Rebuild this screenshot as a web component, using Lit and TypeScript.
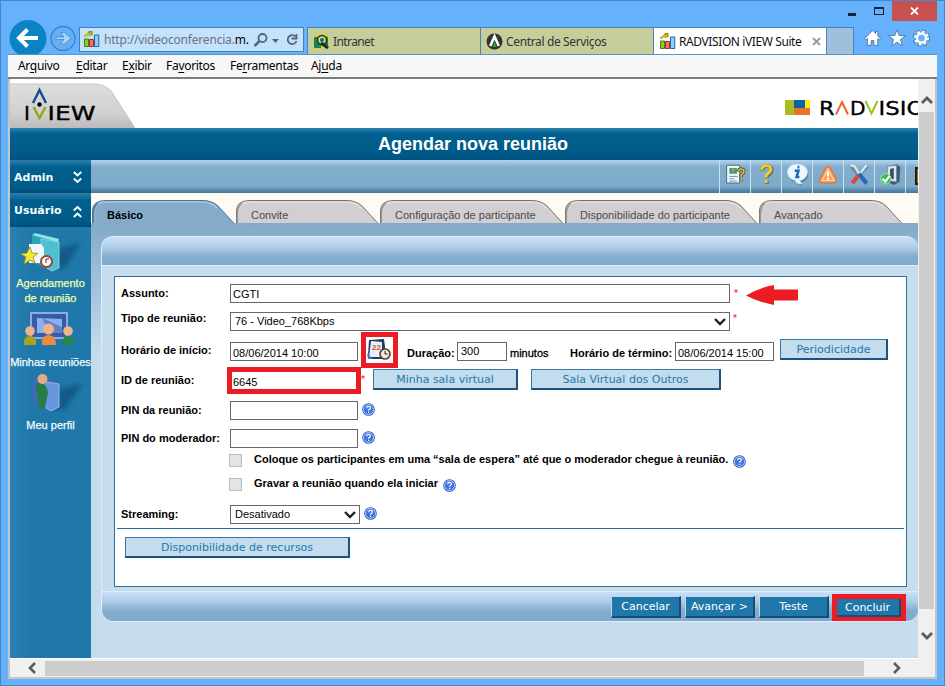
import { LitElement, html, css, svg } from "lit";
import { customElement } from "lit/decorators.js";

const help = html`<svg class="help" width="13" height="13" viewBox="0 0 13 13"><circle cx="6.5" cy="6.5" r="6.3" fill="#2b57bd"/><circle cx="6.5" cy="6.5" r="5" fill="#3b72e4" stroke="#d9e6ff" stroke-width=".8"/><path d="M4.700 5.200c0-2.400 3.700-2.300 3.700-.2 0 1.400-1.800 1.300-1.800 2.700M6.600 8.700v1.200" fill="none" stroke="#fff" stroke-width="1.200"/></svg>`;
const chart = html`<svg width="17" height="17" viewBox="0 0 17 17"><path d="M1.500 8h4v7.500h-4z" fill="#8ccb2d" stroke="#3f7d16"/><path d="M6.500 8.500h4v7h-4z" fill="#f4735f" stroke="#b8281e"/><path d="M11.500 4h4.300v11.500h-4.300z" fill="#8ad0f7" stroke="#1d69ad"/><path d="M1.500 5.500 5 2.800l1.500 1L8 1.500M5.500 1.200h3v3" fill="none" stroke="#8c9a08" stroke-width="2.200"/><path d="M2 5.200 5 2.800l1.500 1L8 1.500" fill="none" stroke="#f5e62a" stroke-width="1"/></svg>`;
const down = html`<svg width="12" height="8" viewBox="0 0 12 8"><path d="m1 1 5 5 5-5" fill="none" stroke="#222" stroke-width="2.400"/></svg>`;

@customElement("nav-tab")
class NavTab extends LitElement {
  static properties = { label: {}, w: { type: Number }, active: { type: Boolean } };
  declare label: string;
  declare w: number;
  declare active: boolean;
  static styles = css`
    :host { display: block; position: relative; height: 23px; }
    svg { display: block; overflow: hidden; }
    .label { position: absolute; left: 15px; top: 8px; font: 11px/14px "Liberation Sans", sans-serif; color: #4b4b4b; white-space: nowrap; }
    .active { color: #000; font-weight: bold; }
  `;
  render() {
    const w = this.w;
    const shape = `M.5 24.500V10Q1 .5 14 .5H${w - 33}Q${w - 24} .5 ${w - 18} 6L${w - 1} 24.500`;
    return html`<svg width=${w} height="23" viewBox=${`0 0 ${w} 23`}>
      <path d=${shape} fill=${this.active ? "#84abc9" : "#d1cfd1"} stroke=${this.active ? "#4d7590" : "#77736e"}/>
      <path d=${`M2.500 23V11Q3 2 14 2H${w - 34}Q${w - 25} 2 ${w - 19} 8`} fill="none" stroke=${this.active ? "#a5c9e1" : "#e0dee0"} stroke-width="1.300"/>
      <path d="M1.500 23V13Q2 6 6 3" fill="none" stroke=${this.active ? "#527d9d" : "#99969a"} stroke-width="1.500"/>
    </svg><span class="label ${this.active ? "active" : ""}">${this.label}</span>`;
  }
}

const toolIcons = [
  svg`<path d="M5 5h14v19H5z" fill="#edf4fb" stroke="#44647c"/><path d="M8 8h8v6H8z" fill="#30a16b"/><circle cx="12" cy="10" r="1.900" fill="#d88158"/><path d="M9 14q3-4 6 0M8 17h9M8 19.500h5M8 22h8" stroke="#718fb1" fill="none"/><path d="M17.500 12q0-3 3-3t3 2.500q0 2.500-3 4v2.500M20.500 20v2.500" stroke="#4d420f" stroke-width="3.200" fill="none"/><path d="M17.500 12q0-3 3-3t3 2.500q0 2.500-3 4v2.500M20.500 20v2.500" stroke="#e7ba4b" stroke-width="1.700" fill="none"/>`,
  svg`<path d="M10 11q0-5 5-5 5 0 5 4 0 3-3 5-2 1-2 4M15 22v3" stroke="#675818" stroke-width="4" fill="none" opacity=".65"/><path d="M9.500 10q0-4.500 5-4.500 4.500 0 4.500 3.500 0 3-3 5-2 1-2 4M14 21v3" stroke="#f5cc25" stroke-width="2.900" fill="none"/>`,
  svg`<path d="M15 6c7 0 11 4 11 8.500s-4 8.500-8 8.500q0 3 2 4-6-1-7-4-8-2-8-9t10-8" fill="#376995" opacity=".8"/><path d="M14 4c7 0 11 4 11 8.500s-4 8.500-8 8.500q0 2 2 4-6 0-7-4c-5-1-8-4-8-8.500S7 4 14 4" fill="#eef6ff" stroke="#d4e7f7"/><path d="M14.500 7h2M11.500 11h4l-2 6.500h3" fill="none" stroke="#1667bd" stroke-width="2.700"/>`,
  svg`<path d="M14 6q2 0 3 2l6 12q1 4-2 4H7q-4 0-2-4l6-12q1-2 3-2" fill="#ef9251" stroke="#d27638"/><path d="M14 9 7.500 21.500h13z" fill="#ff9c52" stroke="#ffd7b0" stroke-width="1.300"/><path d="M14 12v5M14 18.500v2" stroke="#fff" stroke-width="2.300"/>`,
  svg`<path d="M6 6q3 4 8 10l8 9M23 6 13 16 7 24" stroke="#43678a" stroke-width="4" fill="none" opacity=".5"/><path d="m22 5-8 10" stroke="#e2e8ef" stroke-width="2.400"/><path d="m14 15-7 9" stroke="#e34639" stroke-width="4.200"/><path d="m5 5 4 1 5 8" stroke="#d9e3ed" stroke-width="2.500" fill="none"/><path d="m14 14 8 10" stroke="#2864bd" stroke-width="4"/>`,
  svg`<path d="m13 6 8-2 4 3-1 16-6 3-6-3z" fill="#415b75"/><path d="m11 6 10-1v18l-10-2z" fill="#dce4ee" stroke="#72859c"/><path d="m14 9 4-1v12l-4-1z" fill="#394f6c"/><circle cx="9.500" cy="19.500" r="5.500" fill="#36bd50" stroke="#9ee89c"/><path d="m6 19.500 3 3 4.500-6" stroke="#fff" stroke-width="2.300" fill="none"/>`,
];

@customElement("app-root")
class AppRoot extends LitElement {
  static styles = css`
    * { box-sizing: border-box; }
    :host { display: block; width: 945px; height: 686px; overflow: hidden; font: 11px/14px "Liberation Sans", Arial, sans-serif; color: #000; }
    svg { display: block; flex: none; }
    .window { width: 945px; height: 686px; border: 1px solid #4388c9; background: #65b1fb; padding: 0 7px; }
    .caption { height: 26px; display: flex; justify-content: flex-end; }
    .close { width: 45px; height: 20px; background: #c75050; display: grid; place-items: center; }
    .min { width: 8px; height: 3px; background: #15263b; margin: 12px 18px 0 0; }
    .max { width: 10px; height: 8px; border: 1px solid #15263b; border-top-width: 2px; margin: 6px 8px 0 0; }
    .chrome { height: 27px; display: flex; font: 12px/27px "Noto Sans", "Open Sans", sans-serif; }
    .round { width: 71px; height: 27px; }
    .round svg { margin-top: -7px; }
    .address { width: 225px; height: 25px; background: #c5e2fd; border: 1px solid #3d81bd; display: flex; align-items: center; padding-left: 3px; color: #68757e; letter-spacing: -.19px; }
    .address span { width: 149px; margin-left: 4px; white-space: nowrap; }
    .address b { font-weight: 400; color: #000; }
    .tabs { display: flex; margin-left: 3px; }
    .btab { width: 173px; height: 27px; background: #c5ce9b; border: 1px solid #4785b5; border-width: 1px 0 0 1px; display: flex; align-items: center; padding-left: 5px; color: #333; }
    .btab span { margin-left: 3px; white-space: nowrap; letter-spacing: -.36px; }
    .btab .short { letter-spacing: -.6px; }
    .btab.on { background: #fff; color: #111; }
    .btab.on span { letter-spacing: -.4px; width: 124px; }
    .x { margin-left: 9px; }
    .new { width: 28px; background: #a0bfdc; border: 1px solid #4785b5; border-bottom: 0; }
    .tools { margin-left: 10px; }
    .menu { height: 25px; background: #f7f7f7; border: solid #7c7c7c; border-width: 1px 0 2px; border-top-color: #5a94c8; display: flex; font: 12px/22px "Noto Sans", "Open Sans", sans-serif; padding-left: 10px; letter-spacing: -.3px; }
    .menu span { white-space: nowrap; }
    .menu .m1 { width: 58px; } .menu .m2 { width: 46px; } .menu .m3 { width: 44px; } .menu .m4 { width: 64px; } .menu .m5 { width: 81px; }
    u { text-underline-offset: 2px; text-decoration-thickness: 1px; }
    .view { height: 600px; width: 929px; border: 2px solid #c5c5c5; border-top: 0; border-right-color: #bfc7cd; display: grid; grid-template: 580px 18px / 908px 17px; background: #f0f0f0; }
    .page { overflow: hidden; display: flex; flex-direction: column; background: #fff; }
    .brand { height: 49px; display: flex; justify-content: space-between; flex: none; }
    .rad { margin-top: 18px; }
    .brand text { font-family: "DejaVu Sans", sans-serif; font-size: 19px; stroke: #000; stroke-width: .35px; }
    .brand .iview text { font-size: 20px; }
    .heading { height: 32px; flex: none; background: linear-gradient(#2d80ad, #00608f 6px, #005988 27px, #004f7c); color: #fff; font: bold 18px/32px "Liberation Sans", sans-serif; padding-left: 368px; }
    .main { display: flex; height: 498px; }
    .side { width: 81px; height: 498px; background: linear-gradient(90deg, #2a81b2, #1f78a9 20px); color: #f4fcff; text-align: center; }
    .acc { height: 34px; background: linear-gradient(#2f80ab, #00608f 7px, #005b89 28px, #004a75); display: flex; justify-content: space-between; padding: 2px 9px 0 4px; align-items: center; font: bold 11px/14px "DejaVu Sans", sans-serif; }
    .first { height: 33px; }
    .item { white-space: nowrap; line-height: 15px; -webkit-text-stroke: .25px; }
    .item svg { margin: 0 auto; }
    .sel { color: #effeb4; }
    .i1 { height: 82px; padding-top: 3px; } .i2 { height: 62px; padding-top: 1px; } .i3 { height: 66px; }
    .content { width: 827px; }
    .bar { height: 33px; background: linear-gradient(#b2d5ee, #82aecd 7px, #7fabca 26px, #44749b); display: flex; padding-left: 628px; overflow: hidden; }
    .tool { width: 31px; flex: none; border-left: 1px solid #c6e2f3; padding-left: 1px; }
    .tabrow { height: 30px; background: #fffbf2; display: flex; padding: 7px 0 0 1px; }
    .body { height: 435px; padding: 13px 0 0 10px; background: linear-gradient(#82aac9, #c5dcef 130px); }
    .panel { width: 817px; height: 386px; background: #c5dded; border: 1px solid #deedf9; border-right: 0; border-radius: 12px; display: flex; flex-direction: column; overflow: hidden; }
    .ptop { height: 29px; flex: none; background: linear-gradient(#cce0f8, #b0cde8 10px, #83accd 20px, #7eabcd); border-bottom: 1px solid #deedf9; }
    .sheet { width: 793px; height: 311px; margin: 10px 0 4px 12px; border: 1px solid #2b6e9b; background: #fff; padding: 7px 2px 0; flex: none; }
    .row { display: flex; align-items: flex-start; padding-left: 4px; white-space: nowrap; }
    .r28 { height: 28px; } .r30 { height: 30px; } .r29 { height: 29px; } .r25 { height: 25px; } .r24 { height: 24px; } .r27 { height: 27px; } .r23 { height: 23px; }
    .lab { width: 109px; font-weight: bold; padding-top: 2px; }
    .up { padding-top: 0; margin-top: -1px; } .t1 { padding-top: 1px; }
    .box { border: 1px solid #686868; height: 19px; background: #fff; padding: 3px 3px 0 2px; line-height: 14px; font-size: 11px; }
    .w500 { width: 500px; } .w128 { width: 128px; }
    .mid { padding-top: 2px; }
    .select { padding: 0 3px 0 4px; line-height: 17px; display: flex; align-items: center; justify-content: space-between; }
    .w130 { width: 130px; }
    .star { color: #e3162a; font-size: 10px; margin: 3px 0 0 4px; width: 4px; }
    .sup { margin: 0 0 0 3px; }
    .arrow { margin: 1px 0 0 8px; }
    .cal { width: 37px; height: 36px; border: 5px solid #ed1c24; margin: -10px 0 0 3px; background: #fff; }
    .dur { margin: 4px 0 0 9px; font-weight: bold; width: 47px; } .mins { margin: 4px 0 0 3px; -webkit-text-stroke: .3px; width: 39px; } .fin { margin: 4px 0 0 21px; font-weight: bold; width: 102px; }
    .w50 { width: 50px; padding: 1px 3px; margin-left: 3px; } .w99 { width: 99px; margin-left: 3px; }
    .btn { height: 21px; background: #c3dcee; border: 1px solid #2f7ba9; border-right: 2px solid #1d5280; border-bottom: 2px solid #1d5280; color: #2679a8; font: 11px/19px "DejaVu Sans", sans-serif; text-align: center; flex: none; }
    .per { width: 108px; margin: -3px 0 0 6px; }
    .b1 { width: 145px; margin: -3px 0 0 8px; } .b2 { width: 190px; margin: -3px 0 0 13px; }
    .idframe { width: 134px; height: 27px; border: 5px solid #ed1c24; margin: -5px 0 0 -3px; padding: 3px 0 0 1px; background: #fff; }
    .ids { margin: 1px 0 0 0; width: 4px; overflow: hidden; }
    .help { margin: 2px 0 0 4px; }
    .low { margin-top: 3px; }
    .cr .help { margin-top: 1px; }
    .cr .ctext + .help { margin-left: 5px; }
    .check { width: 13px; height: 13px; background: #e4e4e4; border: 1px solid #bcbcbc; margin: 0 12px 0 108px; }
    .ctext { font-weight: bold; margin-top: -2px; }
    .rule { height: 1px; background: #2b7196; margin-bottom: 8px; }
    .res { width: 225px; margin-left: 8px; }
    .foot { height: 31px; flex: none; border-top: 1px solid #deedf9; background: linear-gradient(#cce0f8, #b0cde8 9px, #83accd 19px, #7eabcd); display: flex; padding: 4px 0 0 509px; }
    .act { width: 70px; height: 22px; margin-right: 4px; border: 1px solid #bcd9ed; border-right: 2px solid #144d79; border-bottom: 2px solid #144d79; background: #1f78a9; color: #fff; font: 11px/20px "DejaVu Sans", sans-serif; text-align: center; white-space: nowrap; }
    .done { margin: -2px 0 0 -1px; width: 74px; height: 28px; border: 5px solid #ed1c24; padding-right: 3px; box-shadow: inset -2px -2px #144d79; line-height: 17px; }
    .vs { display: flex; flex-direction: column; align-items: center; }
    .vs i { width: 15px; height: 497px; background: #cdcdcd; margin: 6px 0 22px; }
    .vs .ua { margin-top: 16px; }
    .hs { display: flex; align-items: center; }
    .hs i { width: 819px; height: 15px; background: #cdcdcd; margin: 0 28px 0 8px; }
    .hs .la { margin-left: 17px; }
  `;

  render() {
    return html`<div class="window">
      <div class="caption"><i class="min"></i><i class="max"></i><div class="close"><svg width="9" height="8" viewBox="0 0 9 8"><path d="m1 .5 7 7M8 .5l-7 7" stroke="#fff" stroke-width="1.800"/></svg></div></div>
      <div class="chrome">
        <div class="round"><svg width="70" height="34" viewBox="8 20 70 34"><circle cx="28" cy="38.500" r="18.500" fill="#0c83c4"/><path d="M38 38H20M27.500 29.500 19 38l8.500 8.500" fill="none" stroke="#fff" stroke-width="4"/><circle cx="63" cy="38.500" r="12" fill="#65aff4" stroke="#3c82c5" stroke-width="1.300"/><path d="M56 37h8l-3.500-4.500h4L71 38.300l-6.500 5.700h-4L64 39.500h-8z" fill="#a8d5ff" stroke="#3f83c2" stroke-width=".7"/></svg></div>
        <div class="address">${chart}<span>http://videoconferencia.<b>m.</b></span>
          <svg width="48" height="18" viewBox="0 0 48 18"><circle cx="9.500" cy="7" r="4" fill="none" stroke="#526777" stroke-width="1.800"/><path d="m6.500 10-5 5" stroke="#526777" stroke-width="2.500"/><path d="M19 8h7l-3.500 4z" fill="#526777"/><path d="M42.500 5.500A4.500 4.500 0 1 0 43.500 10M43.500 3v4.500h-5" fill="none" stroke="#526777" stroke-width="1.800"/></svg></div>
        <div class="tabs">
          <div class="btab"><svg width="17" height="17" viewBox="0 0 17 17"><path d="M1 2 15 1l1 14-15 1z" fill="#e8cc22"/><path d="M1 4h5l-1 4 3 4v3H1zM11 3l4 1v11l-4-4z" fill="#168451"/><circle cx="9" cy="7" r="4.500" fill="#d5db63" stroke="#163b38" stroke-width="1.500"/><circle cx="9" cy="7" r="2" fill="#245a9a"/><path d="m8 10 7 5" stroke="#122f2e" stroke-width="3"/></svg><span class="short">Intranet</span></div>
          <div class="btab"><svg width="17" height="17" viewBox="0 0 17 17"><circle cx="8.500" cy="8.500" r="8" fill="#333"/><path d="M4.200 13 8.500 3.500 12.800 13" fill="none" stroke="#fff" stroke-width="2.600"/><path d="m8.500 8 2 6h-4z" fill="#2c9e3f"/></svg><span>Central de Serviços</span></div>
          <div class="btab on">${chart}<span>RADVISION iVIEW Suite</span><svg class="x" width="9" height="9" viewBox="0 0 9 9"><path d="m1 1 7 7M8 1 1 8" stroke="#999" stroke-width="1.800"/></svg></div>
          <div class="new"></div>
        </div>
        <svg class="tools" width="70" height="24" viewBox="0 0 70 24"><g fill="#fff" stroke="#42698e" stroke-width=".8"><path d="m.8 11.500 7.700-8 3 3V4.300h2.300v4.600l2.700 2.600-1.300 1.300-1.400-1.300v6.800h-3.900v-4.700H7.200v4.700H3.400v-6.800L2 12.800z"/><path d="m33 2.800 2.200 5.700 6.200.2-4.900 3.900 1.700 6.200-5.200-3.600-5.200 3.600 1.700-6.200-4.900-3.900 6.200-.2z"/></g><circle cx="57.500" cy="11" r="6.400" fill="none" stroke="#42698e" stroke-width="4.300" stroke-dasharray="2.900 2.126"/><circle cx="57.500" cy="11" r="6" fill="none" stroke="#fff" stroke-width="3.200" stroke-dasharray="2.300 2.412"/><circle cx="57.500" cy="11" r="4.500" fill="none" stroke="#fff" stroke-width="2.300"/></svg>
      </div>
      <div class="menu"><span class="m1">Ar<u>q</u>uivo</span><span class="m2"><u>E</u>ditar</span><span class="m3">E<u>x</u>ibir</span><span class="m4">Fa<u>v</u>oritos</span><span class="m5">Fe<u>r</u>ramentas</span><span>Aj<u>u</u>da</span></div>
      <div class="view">
        <div class="page">
          <div class="brand">
            <svg class="iview" width="126" height="49" viewBox="0 0 126 49"><defs><linearGradient id="g" x1="0" y1="0" x2="0" y2="1"><stop stop-color="#dedede"/><stop offset=".65" stop-color="#d2d0d1"/><stop offset="1" stop-color="#bcbaba"/></linearGradient></defs><path d="M0 5h84q10 0 17 7l24 37H0z" fill="url(#g)"/><path d="M0 5h84q10 0 17 7l24 37" fill="none" stroke="#c4c4c4"/><path d="M23 24l6.500-13L36 24" fill="none" stroke="#164f93" stroke-width="2.500"/><circle cx="29.500" cy="25.500" r="2.200"/><path d="m23.500 28 6 11 6-11" fill="none" stroke="#91a91d" stroke-width="2.500"/><text x="14" y="40.500">I</text><text x="37.500" y="40.500" textLength="48" lengthAdjust="spacingAndGlyphs">IEW</text></svg>
            <svg class="rad" width="133" height="24" viewBox="0 0 133 24"><path d="M0 3h9v15H0z" fill="#a9bd22"/><path d="M9 3h11v8H9z" fill="#0b62a0"/><path d="M20 3h5v8h-5z" fill="#f9ed14"/><path d="M9 11h16v7H9z" fill="#ee722b"/><text x="34" y="17.500" textLength="15.500" lengthAdjust="spacingAndGlyphs">R</text><path d="m51 17.500 6-12.500 6 12.500" fill="none" stroke="#ee6330" stroke-width="2"/><text x="65" y="17.500" textLength="15.500" lengthAdjust="spacingAndGlyphs">D</text><path d="m80.500 4 6 12.500L92.500 4" fill="none" stroke="#a2bd22" stroke-width="2"/><text x="93.500" y="17.500" textLength="46" lengthAdjust="spacingAndGlyphs">ISIO</text></svg>
          </div>
          <div class="heading">Agendar nova reunião</div>
          <div class="main">
            <div class="side">
              <div class="acc first">Admin<svg width="9" height="13" viewBox="0 0 9 13"><path d="m.8 1 3.700 3.500L8.200 1M.8 7.500 4.500 11l3.700-3.500" fill="none" stroke="#fff" stroke-width="1.900"/></svg></div>
              <div class="acc">Usuário<svg width="9" height="13" viewBox="0 0 9 13"><path d="m.8 5.500L4.500 2l3.700 3.500M.8 12l3.700-3.500L8.200 12" fill="none" stroke="#fff" stroke-width="1.900"/></svg></div>
              <div class="item sel i1"><svg width="78" height="46" viewBox="0 0 78 46"><defs><filter id="f"><feGaussianBlur stdDeviation="2"/></filter></defs><path d="m48 18 20-5-15 25H35z" fill="#115077" opacity=".7" filter="url(#f)"/><path d="m20 5 27 4v30l-27-6z" fill="#2fa3bc"/><path d="m29 9 18 3v26l-7 3-11-6z" fill="#52bfd0" stroke="#77d2dd"/><path d="m20 5 3-2 24 6-1 3z" fill="#92e4e9"/><path d="M17 14h12l3 4v15H17z" fill="#f1f6ff"/><path d="m18 17 2 6 6 .4-5 3.600 2 6-5-3-6 4 2-7-5-3 6-1z" fill="#f5e93b" stroke="#ae9e13"/><circle cx="34.500" cy="31.500" r="5.500" fill="#fff" stroke="#974631" stroke-width="2"/><path d="M34 33v-4h3" fill="none" stroke="#333"/></svg>Agendamento<br>de reunião</div>
              <div class="item i2"><svg width="78" height="45" viewBox="0 0 78 45"><path d="M19 3h36v25H19z" fill="#365ca7" stroke="#8eabe3" stroke-width="2"/><path d="m25 8 25 1v14H25z" fill="#8bb1ed"/><path d="m30 8 20 9v6H37z" fill="#6382c7"/><circle cx="18" cy="21" r="4.800" fill="#efb588"/><circle cx="56" cy="21" r="4.800" fill="#efb588"/><circle cx="36.500" cy="19" r="5.500" fill="#efb588"/><path d="M12 35q-1-9 6-9t6 9z" fill="#a8a21f"/><path d="M50 35q0-9 6-9t6 9z" fill="#26864c"/><path d="M30 35q-1-10 6.500-10T44 35z" fill="#ee8b3c"/></svg>Minhas reuniões</div>
              <div class="item i3"><svg width="78" height="47" viewBox="0 0 78 47"><path d="m49 17 22-4-19 26H38z" fill="#115077" opacity=".7" filter="url(#f)"/><path d="m21 5 26 6v26l-26-7z" fill="#4269b4"/><path d="m29 10 18 3v23l-8 4-10-6z" fill="#6796de" stroke="#91b6ee"/><path d="M26 12q9-1 10 10l-3 15-6 1-2-15q-3-8 1-11" fill="#247c49"/><circle cx="30.500" cy="8" r="5" fill="#e3ac80"/></svg>Meu perfil</div>
            </div>
            <div class="content">
              <div class="bar">${toolIcons.map((icon) => html`<div class="tool"><svg width="29" height="32" viewBox="-1 0 31 33">${icon}</svg></div>`)}<div class="tool"><svg width="12" height="30"><path d="M8 7h8v18H8z" fill="#26190e"/><path d="M10 9h6v14h-6z" fill="#ad7521"/></svg></div></div>
              <div class="tabrow"><nav-tab w="144" label="Básico" active></nav-tab><nav-tab w="144" label="Convite"></nav-tab><nav-tab w="185" label="Configuração de participante"></nav-tab><nav-tab w="194" label="Disponibilidade do participante"></nav-tab><nav-tab w="145" label="Avançado"></nav-tab></div>
              <div class="body"><div class="panel">
                <div class="ptop"></div>
                <div class="sheet">
                  <div class="row r28"><span class="lab">Assunto:</span><div class="box w500 mid">CGTI</div><span class="star">*</span><svg class="arrow" width="53" height="20" viewBox="0 0 53 20"><path d="M0 10.500Q12 3 28 0v4.500h24v11H28V20Q12 17 0 10.500" fill="#ed1c24"/></svg></div>
                  <div class="row r30"><span class="lab up">Tipo de reunião:</span><div class="box w500 select">76 - Video_768Kbps${down}</div><span class="star sup">*</span></div>
                  <div class="row r30"><span class="lab t1">Horário de início:</span><div class="box w128">08/06/2014 10:00</div><div class="cal"><svg width="27" height="26" viewBox="0 0 27 26"><path d="m3 3 15-1 2 16-3 4H5L2 19z" fill="#183e68"/><path d="m5 4 11 1v15H3z" fill="#e7effa"/><path d="m1 16 6 6H2z" fill="#4379c1"/><text x="6" y="13" font-size="8" font-weight="bold" fill="#dc4e2b">22</text><circle cx="19" cy="17" r="5" fill="#f1e7dd" stroke="#663d2b" stroke-width="1.700"/><path d="M19 14v3h2.500" stroke="#222" fill="none"/></svg></div><span class="dur">Duração:</span><div class="box w50">300</div><span class="mins">minutos</span><span class="fin">Horário de término:</span><div class="box w99">08/06/2014 15:00</div><div class="btn per">Periodicidade</div></div>
                  <div class="row r29"><span class="lab t1">ID de reunião:</span><div class="idframe">6645</div><span class="star ids">*</span><div class="btn b1">Minha sala virtual</div><div class="btn b2">Sala Virtual dos Outros</div></div>
                  <div class="row r28"><span class="lab">PIN da reunião:</span><div class="box w128"></div>${help}</div>
                  <div class="row r25"><span class="lab">PIN do moderador:</span><div class="box w128"></div>${help}</div>
                  <div class="row r24 cr"><i class="check"></i><span class="ctext">Coloque os participantes em uma “sala de espera” até que o moderador chegue à reunião.</span>${help}</div>
                  <div class="row r27 cr"><i class="check"></i><span class="ctext">Gravar a reunião quando ela iniciar</span>${help}</div>
                  <div class="row r23"><span class="lab">Streaming:</span><div class="box select w130">Desativado${down}</div>${help}</div>
                  <div class="rule"></div>
                  <div class="btn res">Disponibilidade de recursos</div>
                </div>
                <div class="foot"><div class="act">Cancelar</div><div class="act">Avançar &gt;</div><div class="act">Teste</div><div class="act done">Concluir</div></div>
              </div></div>
            </div>
          </div>
        </div>
        <div class="vs"><svg class="ua" width="12" height="11" viewBox="0 0 12 11"><path d="m1 8 5-5 5 5" fill="none" stroke="#5b5b5b" stroke-width="2.800"/></svg><i></i><svg width="12" height="10" viewBox="0 0 12 10"><path d="m1 2 5 5 5-5" fill="none" stroke="#5b5b5b" stroke-width="2.800"/></svg></div>
        <div class="hs"><svg class="la" width="10" height="12" viewBox="0 0 10 12"><path d="M8 1 3 6l5 5" fill="none" stroke="#5b5b5b" stroke-width="2.600"/></svg><i></i><svg width="10" height="12" viewBox="0 0 10 12"><path d="m2 1 5 5-5 5" fill="none" stroke="#5b5b5b" stroke-width="2.600"/></svg></div>
      </div>
    </div>`;
  }
}
